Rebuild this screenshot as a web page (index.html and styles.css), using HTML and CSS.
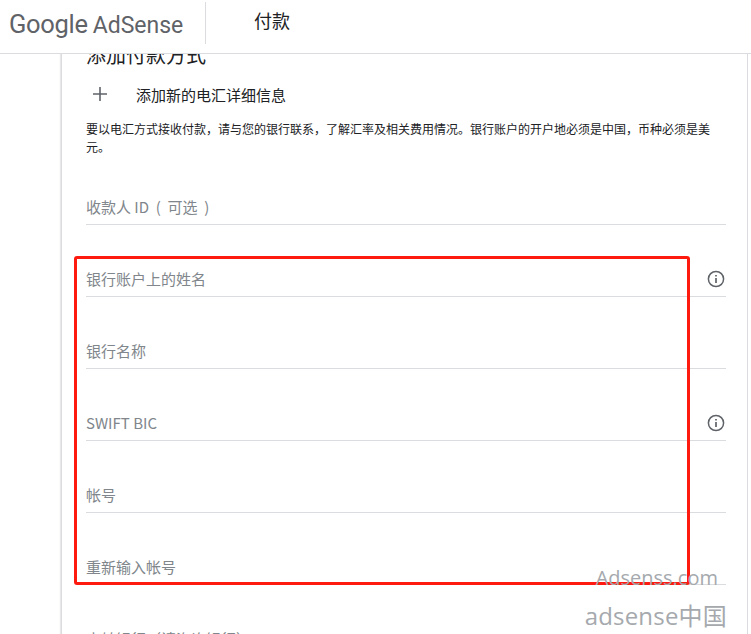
FILE: index.html
```html
<!DOCTYPE html>
<html lang="zh-CN">
<head>
<meta charset="utf-8">
<title>付款</title>
<link rel="stylesheet" href="styles.css">
</head>
<body>
<header class="topbar">
  <div class="brand"><span class="brand-google">Google</span><span class="brand-product">AdSense</span></div>
  <div class="topbar-title">付款</div>
</header>
<main class="viewport">
  <section class="card">
    <h2 class="card-title">添加付款方式</h2>
    <div class="add-row">
      <svg class="plus" width="14" height="14" viewBox="0 0 14 14"><path d="M7 0v14M0 7h14" stroke="#5f6368" stroke-width="1.6" fill="none"/></svg>
      <span>添加新的电汇详细信息</span>
    </div>
    <p class="note">要以电汇方式接收付款，请与您的银行联系，了解汇率及相关费用情况。银行账户的开户地必须是中国，币种必须是美元。</p>
    <div class="fields">
      <div class="field">收款人 ID &nbsp;( &nbsp;可选 &nbsp;)</div>
      <div class="field-row">
        <div class="field">银行账户上的姓名</div>
        <svg class="info" width="18" height="18" viewBox="0 0 18 18"><circle cx="9" cy="9" r="7.6" fill="none" stroke="#5f6368" stroke-width="1.5"/><path d="M9 8v5M9 5v1.6" stroke="#5f6368" stroke-width="1.7"/></svg>
      </div>
      <div class="field">银行名称</div>
      <div class="field-row">
        <div class="field">SWIFT BIC</div>
        <svg class="info" width="18" height="18" viewBox="0 0 18 18"><circle cx="9" cy="9" r="7.6" fill="none" stroke="#5f6368" stroke-width="1.5"/><path d="M9 8v5M9 5v1.6" stroke="#5f6368" stroke-width="1.7"/></svg>
      </div>
      <div class="field">帐号</div>
      <div class="field">重新输入帐号</div>
      <div class="field">中转银行（请咨询银行）</div>
    </div>
  </section>
</main>
<div class="highlight"></div>
<div class="watermark">
  <div class="wm-top">Adsenss.com</div>
  <div class="wm-bottom">adsense中国</div>
</div>
</body>
</html>
```
FILE: styles.css
```css
* { box-sizing: border-box; }
html, body { margin: 0; height: 634px; overflow: hidden; background: #fff; }
body {
  font-family: "Noto Sans CJK SC", "Noto Sans", sans-serif;
  color: #202124;
  display: flex;
  flex-direction: column;
  position: relative;
}
.topbar {
  height: 54px;
  flex: none;
  border-bottom: 1px solid #dadce0;
  display: flex;
  align-items: flex-start;
  background: #fff;
  position: relative;
  z-index: 1;
}
.brand {
  width: 206px;
  height: 42px;
  margin-top: 2px;
  padding: 6px 0 0 9px;
  border-right: 1px solid #dadce0;
  font: 23px/32px Roboto, "Noto Sans", sans-serif;
  color: #5f6368;
  white-space: nowrap;
}
.brand-google { font-size: 25.5px; letter-spacing: -0.3px; margin-right: 5px; }
.topbar-title {
  margin: 7px 0 0 48px;
  font-size: 18px;
  line-height: 26px;
}
.viewport { flex: 1; overflow: hidden; padding-left: 61px; }
.card {
  margin-top: -14px;
  width: 687px;
  height: 800px;
  border-left: 1px solid #dadce0;
  border-right: 1px solid #dadce0;
  box-shadow: -1px 0 1px #e8e8e8;
  padding: 0 20px 0 24px;
}
.card-title {
  margin: 0;
  font-size: 20px;
  line-height: 30px;
  font-weight: 400;
}
.add-row {
  display: flex;
  align-items: center;
  height: 24px;
  margin-top: 12px;
  font-size: 14px;
}
.plus { margin: 0 29px 0 7px; }
.add-row span { font-size: 15px; }
.note {
  margin: 14px 0 0;
  font-size: 12px;
  line-height: 18px;
  width: 628px;
}
.fields { margin-top: 21px; width: 640px; }
.field {
  flex: 1;
  height: 72px;
  padding-top: 42px;
  border-bottom: 1px solid #dadce0;
  font-size: 15px;
  line-height: 24px;
  color: #80868b;
  white-space: nowrap;
}
.fields > .field:first-child { height: 48px; padding-top: 18px; }
.field-row { display: flex; position: relative; }
.info { position: absolute; right: 1px; top: 45px; }
.highlight {
  position: absolute;
  left: 74px;
  top: 256px;
  width: 616px;
  height: 329px;
  border: 3px solid #ff1a0f;
  border-radius: 3px;
}
.watermark {
  position: absolute;
  right: 24px;
  top: 563px;
  color: #a5a9ad;
  text-align: right;
  font-family: "Open Sans", "Noto Sans CJK SC", sans-serif;
  white-space: nowrap;
}
.wm-top { font-size: 20px; line-height: 30px; margin-right: 9px; }
.wm-bottom { font-size: 24px; line-height: 46px; letter-spacing: .2px; }
```
